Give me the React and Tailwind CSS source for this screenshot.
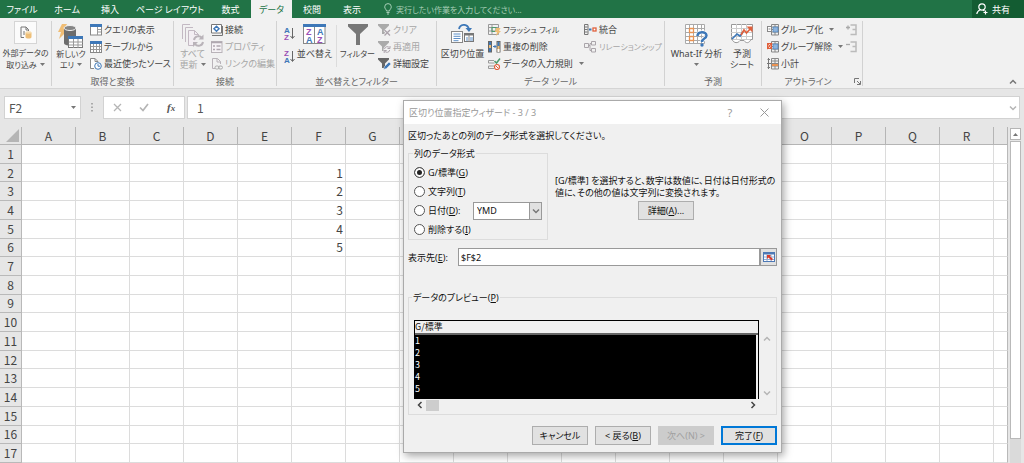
import React, { useState } from 'react';

const columns = 'ABCDEFGHIJKLMNOPQR'.split('');
const rows = Array.from({ length: 17 }, (_, i) => i + 1);
const cells = { F2: 1, F3: 2, F4: 3, F5: 4, F6: 5 };

const tabs = [
  { name: 'ファイル', width: 'w-[44px]' },
  { name: 'ホーム', width: 'w-[46px]' },
  { name: '挿入', width: 'w-[40px]' },
  { name: 'ページ レイアウト', width: 'w-[80px]' },
  { name: '数式', width: 'w-[41px]' },
  { name: 'データ', width: 'w-[41px]' },
  { name: '校閲', width: 'w-[40px]' },
  { name: '表示', width: 'w-[40px]' },
];

/* ---------- icons ---------- */

const Svg = ({ w = 12, h = 12, children }) => (
  <svg width={w} height={h} viewBox={`0 0 ${w} ${h}`} fill="none" className="shrink-0" aria-hidden="true">
    {children}
  </svg>
);

const Caret = () => (
  <svg width="5" height="3" viewBox="0 0 5 3" className="inline-block shrink-0 align-middle" aria-hidden="true">
    <path d="M0 0h5L2.5 3z" fill="#777" />
  </svg>
);

const Chevron = ({ dir, color = '#b5b5b5' }) => {
  const d = {
    up: 'M1 5.5 4 2.5 7 5.5',
    down: 'M1 2.5 4 5.5 7 2.5',
    left: 'M5.5 1 2.5 4 5.5 7',
    right: 'M2.5 1 5.5 4 2.5 7',
  };
  return (
    <Svg w={8} h={8}>
      <path d={d[dir]} stroke={color} strokeWidth="1.5" />
    </Svg>
  );
};

const ExternalDataIcon = () => (
  <Svg w={12} h={13}>
    <path d="M4 11.5H1V1h5l2.500 2.500V5" stroke="#777" />
    <path d="M6 1v3h2.500M3 6h2M3 8h2" stroke="#777" />
    <path d="M5.500 6.500v4.500c0 2 6 2 6 0V6.500z" fill="#eebf78" />
    <ellipse cx="8.500" cy="6.500" rx="3" ry="1.300" fill="#f7dcae" />
  </Svg>
);

const NewQueryIcon = () => (
  <Svg w={26} h={25}>
    <path d="M4 0h5L6 6h4L1 15l2-7H0z" fill="#f0bd74" />
    <path d="M6 4v15c0 3.500 12 3.500 12 0V4z" fill="#6d6d6d" />
    <ellipse cx="12" cy="4" rx="6" ry="2.500" fill="#858585" stroke="#f1f1f1" />
    <rect x="10.500" y="12.500" width="14" height="11" fill="#fff" stroke="#777" />
    <path d="M10 12h15v3H10z" fill="#3e78b8" />
    <path d="M15.500 15v9M20 15v9M11 18h14M11 21h14" stroke="#999" />
  </Svg>
);

const QueryViewIcon = () => (
  <Svg>
    <rect x="0.500" y="0.500" width="11" height="10.500" fill="#fff" stroke="#888" />
    <path d="M0 0h12v3H0z" fill="#3e78b8" />
    <path d="M7.500 3v8M8 5.500h3M8 8h3" stroke="#999" />
  </Svg>
);

const TableIcon = () => (
  <Svg>
    <rect x="0.500" y="0.500" width="11" height="11" fill="#fff" stroke="#888" />
    <path d="M0 0h12v3H0z" fill="#3e78b8" />
    <path d="M3.500 3v8M6.500 3v8M9.500 3v8M1 5.500h10M1 8.500h10" stroke="#999" />
  </Svg>
);

const RecentIcon = () => (
  <Svg>
    <path d="M4 10.500H0.500v-10h4.500l3 3" fill="#fff" stroke="#888" />
    <path d="M5 0.500v3h3" stroke="#888" />
    <circle cx="8" cy="8" r="3.300" fill="#fff" stroke="#3e78b8" />
    <path d="M8 6v2.200h2" stroke="#3e78b8" />
  </Svg>
);

const RefreshAllIcon = () => (
  <Svg w={24} h={23}>
    <path d="M1.500 15V0.500H9M4.500 18V3.500H12" stroke="#c3b9c3" />
    <path d="M12 21.500H7.500v-15h6l4 4V13" fill="#f3eef3" stroke="#c3b9c3" />
    <path d="M13.500 6.500v4h4" stroke="#c3b9c3" />
    <path d="M13 16a4.500 4.500 0 0 1 8-2M22 18a4.500 4.500 0 0 1-8 2" stroke="#b9b3b9" strokeWidth="2" />
    <path d="M22.500 10.500v5h-5zM12 23v-5h5z" fill="#b9b3b9" />
  </Svg>
);

const ConnectionIcon = () => (
  <Svg>
    <path d="M0.500 0.500h10v8.500h-10z" fill="#fff" stroke="#777" />
    <path d="M1 11.500h10.500V2" stroke="#777" />
    <path d="M5.500 2.200 8 4.700 5.500 7.200 3 4.700z" stroke="#3e78b8" strokeWidth="1.500" />
  </Svg>
);

const PropertyIcon = () => (
  <Svg>
    <rect x="0.500" y="0.500" width="10.500" height="11" fill="#f6f3f6" stroke="#b9b3b9" />
    <path d="M0 1.500h11M2 5h2M2 8.500h2M5.500 5h4M5.500 8.500h4" stroke="#b0a8b0" strokeWidth="1.500" />
  </Svg>
);

const LinkEditIcon = () => (
  <Svg>
    <path d="M4 10.500H1.500v-10h5l3 3V6M6 0.500v3.500h3.500" stroke="#b9b3b9" />
    <rect x="4" y="8" width="4" height="3" rx="1.500" stroke="#aaa" />
    <rect x="7.500" y="8" width="4" height="3" rx="1.500" stroke="#aaa" />
  </Svg>
);

const SortIcon = ({ reverse }) => (
  <Svg w={11} h={14}>
    <g fontFamily="Liberation Sans, sans-serif" fontSize="8" fontWeight="bold">
      <text x="0" y="6" fill={reverse ? '#9a4fb5' : '#3e78b8'}>{reverse ? 'Z' : 'A'}</text>
      <text x="0" y="13" fill={reverse ? '#3e78b8' : '#9a4fb5'}>{reverse ? 'A' : 'Z'}</text>
    </g>
    <path d="M8.500 1v10M6.500 9l2 2.500 2-2.500" stroke="#666" />
  </Svg>
);

const SortDialogIcon = () => (
  <Svg w={23} h={20}>
    <rect x="0.500" y="0.500" width="21.500" height="19" fill="#fff" stroke="#888" />
    <path d="M0 0h23v3H0z" fill="#3e78b8" />
    <path d="M11.500 3v17" stroke="#888" />
    <g fontFamily="Liberation Sans, sans-serif" fontSize="9" fontWeight="bold">
      <text x="3" y="11" fill="#9a4fb5">Z</text>
      <text x="3" y="19" fill="#3e78b8">A</text>
      <text x="14" y="11" fill="#3e78b8">A</text>
      <text x="14" y="19" fill="#9a4fb5">Z</text>
    </g>
  </Svg>
);

const FilterIcon = () => (
  <Svg w={22} h={21}>
    <path d="M1 0h20v2.500l-8 7.500v11H9V10L1 2.500z" fill="#777" />
  </Svg>
);

const ClearIcon = () => (
  <Svg w={13}>
    <path d="M0 0h11v1.500L7 5.500V10H4V5.500L0 1.500z" fill="#aaa" />
    <path d="M6.500 6 12 11.500M12 6 6.500 11.500" stroke="#f1f1f1" strokeWidth="3" />
    <path d="M6.500 6 12 11.500M12 6 6.500 11.500" stroke="#aba3ab" strokeWidth="1.300" />
  </Svg>
);

const ReapplyIcon = () => (
  <Svg w={13}>
    <path d="M0 0h11v1.500L7 5.500V10H4V5.500L0 1.500z" fill="#aaa" />
    <circle cx="9" cy="8.500" r="3.500" fill="#f1f1f1" />
    <path d="M6.500 8a2.700 2.700 0 0 1 5-1M11.700 9a2.700 2.700 0 0 1-5 1M12 5v2.500H9.500M6.200 12V9.500h2.500" stroke="#aba3ab" />
  </Svg>
);

const AdvancedIcon = () => (
  <Svg w={13}>
    <path d="M0 0h11v1.500L7 5.500V10H4V5.500L0 1.500z" fill="#666" />
    <path d="m5.500 11.500 1-3L11 4l2 2-4.500 4.500z" fill="#3e78b8" stroke="#f1f1f1" strokeWidth="0.500" />
  </Svg>
);

const TextToColumnsIcon = () => (
  <Svg w={24} h={20}>
    <path d="M8 5c1-5 8-6 10 0" stroke="#3e78b8" strokeWidth="1.800" />
    <path d="M14.500 4H21l-3 4z" fill="#3e78b8" />
    <rect x="0.500" y="7.500" width="11" height="11" fill="#fff" stroke="#888" />
    <path d="M2.500 10h7M2.500 12.300h7M2.500 14.500h7M2.500 16.700h5" stroke="#5d8fc7" />
    <rect x="13.500" y="9.500" width="9" height="8" fill="#fff" stroke="#777" />
    <path d="M13 9h10v2.500H13z" fill="#777" />
    <path d="M18 11v7" stroke="#888" />
    <path d="M15 14h2M19 14h3M15 16h2M19 16h3" stroke="#5d8fc7" />
  </Svg>
);

const FlashFillIcon = () => (
  <Svg w={13}>
    <path d="M0.500 0.500h10v10h-10zM0 3.500h10M0 7h10M4 0v10" stroke="#999" />
    <rect x="4" y="3.500" width="4" height="4" stroke="#4e9a6d" />
    <path d="M8 4h4.500l-1.500 3h2L8 12l1-4H7z" fill="#f0bd74" />
  </Svg>
);

const DuplicateIcon = () => (
  <Svg w={13}>
    <rect x="0.500" y="0.500" width="3" height="10.500" fill="#3e78b8" stroke="#666" />
    <path d="M1 4h2v3H1z" fill="#f0bd74" />
    <path d="M5 5.500h3M6.500 4 8 5.500 6.500 7" stroke="#3e78b8" />
    <rect x="9" y="0.500" width="3" height="10.500" fill="#f0bd74" stroke="#666" />
    <path d="M9.500 1h2v4h-2z" fill="#3e78b8" />
    <path d="M9.500 8h2v3h-2z" fill="#fff" />
  </Svg>
);

const ValidationIcon = () => (
  <Svg w={13}>
    <path d="M6 2.500H0.500V5h6M6 8H0.500v2.500H6" stroke="#999" />
    <path d="m6.500 3 2 2L12 0.500" stroke="#4e9a6d" strokeWidth="1.500" />
    <circle cx="9" cy="9" r="2.500" fill="#fff" stroke="#e0603c" strokeWidth="1.200" />
    <path d="m7.500 7.500 3 3" stroke="#e0603c" />
  </Svg>
);

const ConsolidateIcon = () => (
  <Svg w={13}>
    <path d="M0.500 0.500h3.500v10H0.500zM0.500 3h3M0.500 5.500h3M0.500 8h3" stroke="#777" />
    <path d="M5 5.500h2.500" stroke="#3e78b8" strokeWidth="2" />
    <rect x="9" y="4" width="3" height="3" fill="#fff" stroke="#e0603c" strokeWidth="1.300" />
  </Svg>
);

const RelationIcon = () => (
  <Svg w={13}>
    <path d="M0.500 2.500h4v4h-4zM7.500 0.500h4v3.500h-4zM7.500 7.500h4V11h-4zM4.500 4.500H6v-2h1.500M6 4.500v5h1.500" stroke="#aaa5aa" />
  </Svg>
);

const WhatIfIcon = () => (
  <Svg w={23} h={23}>
    <rect x="0.500" y="0.500" width="19" height="19" fill="#fff" />
    <path d="M0.500 0.500h19v19h-19zM0 4.500h19M0 8.500h19M0 12.500h19M0 16.500h19M4.500 0v19M8.500 0v19M12.500 0v19M16.500 0v19" stroke="#aaa" />
    <path d="M4.500 4.500h4v4h-4zM4.500 12.500h4v4h-4z" fill="#fff" stroke="#eb9352" strokeWidth="1.300" />
    <path d="M12.500 12c0-5 9-5 9-.5 0 3.500-4.500 2.500-4.500 6.500" stroke="#fff" strokeWidth="4" />
    <path d="M12.500 12c0-5 9-5 9-.5 0 3.500-4.500 2.500-4.500 6.500" stroke="#3e78b8" strokeWidth="2.500" />
    <circle cx="17" cy="21" r="1.700" fill="#3e78b8" />
  </Svg>
);

const ForecastIcon = () => (
  <Svg w={23} h={20}>
    <path d="M0.500 0.500h21v15h-21z" fill="#fff" stroke="#999" />
    <path d="M0 4.500h21M0 8.500h21M0 12.500h21M5.500 0v15M10.500 0v15M15.500 0v15" stroke="#ccc" />
    <path d="M1 15.500c2 4 6 4 8 1h4c2 3 5 3 7-1" fill="#fff" stroke="#999" />
    <path d="m1 15 5-5 3 2 3-4" stroke="#3e78b8" strokeWidth="1.700" />
    <path d="m10 11 3-5 2.500 3L20 4" stroke="#e0603c" strokeWidth="1.700" />
    <path d="M15.500 2.500H21.500V8.500z" fill="#e0603c" />
  </Svg>
);

const GroupIcon = ({ kind }) => (
  <Svg>
    <path d="M4.500 0.500h7v10.500h-7zM4.500 3h7M4.500 5.500h7M4.500 8h7M8 0v11" stroke="#888" />
    {kind === 'subtotal' ? (
      <>
        <path d="M0.500 1.500H3M0.500 9.500H3M1.500 0v11M0 5.500h4" stroke="#777" />
        <path d="M5 6h6v2H5z" fill="#eb9352" />
      </>
    ) : (
      <>
        <path d="M6 3h5v5H6z" fill="#8fb4dc" stroke="#3e78b8" strokeWidth="0.600" />
        <rect x="0.500" y="2.500" width="4" height="5" fill="#fff" stroke={kind === 'ungroup' ? '#e0603c' : '#888'} />
        {kind === 'ungroup' ? (
          <path d="m0 8 5-6M1 3l3 4" stroke="#e0603c" strokeWidth="1.200" />
        ) : (
          <path d="M1.500 5h2" stroke="#888" />
        )}
      </>
    )}
  </Svg>
);

const DetailIcon = ({ plus }) => (
  <Svg w={11}>
    <path d={plus ? 'M0 3.500h4M2 1.500v4' : 'M0 3.500h4'} stroke="#a9a9a9" strokeWidth="1.300" />
    <path d="M4.500 1H10v9.500H4.500M6.500 5.500h3.500" stroke="#bbb" strokeWidth="1.500" />
  </Svg>
);

const BulbIcon = () => (
  <Svg w={8} h={12}>
    <path d="M2.500 8C2.500 6.500 0.700 5.800 0.700 3.900a3.300 3.300 0 0 1 6.600 0C7.300 5.800 5.500 6.500 5.500 8zM2.500 9.500h3M3 11h2" stroke="#a5cdb5" />
  </Svg>
);

const ShareIcon = () => (
  <Svg>
    <circle cx="6" cy="4" r="3.200" stroke="#fff" strokeWidth="1.200" />
    <path d="M4.500 6.500C2.500 7.500 1 9 0.800 11M7 7l1.500 1M9.500 7.500v4M7.500 9.500h4" stroke="#fff" strokeWidth="1.200" />
  </Svg>
);

const RefEditIcon = () => (
  <Svg w={12} h={10}>
    <rect x="0.500" y="0.500" width="11" height="9" fill="#fff" stroke="#4d79b5" />
    <path d="M0 0h12v2.500H0z" fill="#4d79b5" />
    <path d="M1 5h10M1 7.500h10M4 2v7M8 2v7" stroke="#8fabd3" />
    <path d="M4 3h4L7 4.200 10 7 8.500 8.500 5.500 5.500 4 7z" fill="#d93a2b" />
  </Svg>
);

/* ---------- ribbon ---------- */

const Group = ({ label, width, children, launcher }) => (
  <div className={`${width} flex shrink-0 flex-col border-r border-[#d2d2d2]`}>
    <div className="flex h-[51px]">{children}</div>
    <div className="flex h-[14px] items-center justify-center text-[#666]">
      <span className="flex-1 pt-1 text-center">{label}</span>
      {launcher && (
        <button aria-label="アウトラインの設定" className="mr-px pt-1">
          <Svg w={7} h={7}>
            <path d="M0.500 5V0.500H5M3 3l3 3M6.500 3v3.500H3" stroke="#777" />
          </Svg>
        </button>
      )}
    </div>
  </div>
);

const BigButton = ({ icon, lines, caret, width, disabled, size = 'text-[9px]' }) => (
  <button
    disabled={disabled}
    className={`${width} ${size} flex shrink-0 flex-col items-center whitespace-nowrap pt-[3px] leading-[11px] disabled:text-[#a6a6a6]`}
  >
    <span className="flex h-[24px] shrink-0 items-start">{icon}</span>
    {lines.map((line, i) => (
      <span key={line} className="flex h-[11px] items-center gap-[3px]">
        {line}
        {caret && i === lines.length - 1 && <Caret />}
      </span>
    ))}
  </button>
);

const SmallButton = ({ icon, label, caret, disabled, size = 'text-[9px]' }) => (
  <button
    disabled={disabled}
    className={`${size} flex h-[17px] items-center gap-[2px] leading-[11px] whitespace-nowrap disabled:text-[#a6a6a6]`}
  >
    {icon}
    <span>{label}</span>
    {caret && <span className="ml-1 flex"><Caret /></span>}
  </button>
);

const Ribbon = () => (
  <div className="flex shrink-0 overflow-hidden border-b border-[#d5d5d5] bg-[#f1f1f1] pt-[3px] pb-[2px] text-[#444]">
    <div className="flex w-[52px] shrink-0 flex-col border-r border-[#d2d2d2]">
      <button className="flex flex-col items-center text-[8px] leading-[11px] whitespace-nowrap">
        <span className="mb-[3px] flex h-[23px] w-[23px] items-center justify-center border border-[#d5d5d5] bg-[#fbfbfb]">
          <ExternalDataIcon />
        </span>
        <span className="h-[12px]">外部データの</span>
        <span className="flex h-[11px] items-center gap-[3px]">取り込み <Caret /></span>
      </button>
    </div>

    <Group label="取得と変換" width="w-[122px]">
      <BigButton icon={<NewQueryIcon />} lines={['新しいク', 'エリ']} caret width="w-[38px]" size="text-[8px]" />
      <div className="flex flex-col">
        <SmallButton icon={<QueryViewIcon />} label="クエリの表示" />
        <SmallButton icon={<TableIcon />} label="テーブルから" />
        <SmallButton icon={<RecentIcon />} label="最近使ったソース" />
      </div>
    </Group>

    <Group label="接続" width="w-[103px]">
      <BigButton icon={<RefreshAllIcon />} lines={['すべて', '更新']} caret disabled width="w-[37px]" />
      <div className="flex flex-col">
        <SmallButton icon={<ConnectionIcon />} label="接続" />
        <SmallButton icon={<PropertyIcon />} label="プロパティ" disabled />
        <SmallButton icon={<LinkEditIcon />} label="リンクの編集" disabled />
      </div>
    </Group>

    <Group label="並べ替えとフィルター" width="w-[160px]">
      <div className="flex w-[18px] shrink-0 flex-col items-end gap-[9px] pt-[6px]">
        <button aria-label="昇順"><SortIcon /></button>
        <button aria-label="降順"><SortIcon reverse /></button>
      </div>
      <BigButton icon={<SortDialogIcon />} lines={['並べ替え']} width="w-[39px]" />
      <div className="ml-[2px] mt-1 h-[42px] w-px bg-[#dcdcdc]" />
      <BigButton icon={<FilterIcon />} lines={['フィルター']} width="w-[41px]" size="text-[8px]" />
      <div className="flex flex-col">
        <SmallButton icon={<ClearIcon />} label="クリア" disabled />
        <SmallButton icon={<ReapplyIcon />} label="再適用" disabled />
        <SmallButton icon={<AdvancedIcon />} label="詳細設定" />
      </div>
    </Group>

    <Group label="データ ツール" width="w-[228px]">
      <BigButton icon={<TextToColumnsIcon />} lines={['区切り位置']} width="w-[51px]" />
      <div className="flex w-[96px] shrink-0 flex-col">
        <SmallButton icon={<FlashFillIcon />} label="フラッシュ フィル" size="text-[8px]" />
        <SmallButton icon={<DuplicateIcon />} label="重複の削除" />
        <SmallButton icon={<ValidationIcon />} label="データの入力規則" caret />
      </div>
      <div className="flex flex-col">
        <SmallButton icon={<ConsolidateIcon />} label="統合" />
        <SmallButton icon={<RelationIcon />} label="リレーションシップ" disabled size="text-[8px]" />
      </div>
    </Group>

    <Group label="予測" width="w-[97px]">
      <BigButton icon={<WhatIfIcon />} lines={['What-If 分析', '']} caret width="w-[63px]" />
      <BigButton icon={<ForecastIcon />} lines={['予測', 'シート']} width="w-[28px]" />
    </Group>

    <Group label="アウトライン" width="w-[101px]" launcher>
      <div className="flex flex-1 flex-col pl-[5px]">
        <SmallButton icon={<GroupIcon kind="group" />} label="グループ化" caret />
        <SmallButton icon={<GroupIcon kind="ungroup" />} label="グループ解除" caret />
        <SmallButton icon={<GroupIcon kind="subtotal" />} label="小計" />
      </div>
      <div className="mr-[5px] flex flex-col">
        <button aria-label="詳細データの表示" className="flex h-[17px] items-center"><DetailIcon plus /></button>
        <button aria-label="詳細を表示しない" className="flex h-[17px] items-center"><DetailIcon /></button>
      </div>
    </Group>

    <button aria-label="リボンを折りたたむ" className="mr-[7px] ml-auto self-end">
      <Chevron dir="up" color="#777" />
    </button>
  </div>
);

const TabBar = ({ active, setActive }) => (
  <div className="flex h-[18px] shrink-0 items-stretch bg-[#217346] text-white">
    {tabs.map(tab => (
      <button
        key={tab.name}
        onClick={() => setActive(tab.name)}
        className={`${tab.width} shrink-0 whitespace-nowrap ${active === tab.name ? 'bg-[#f1f1f1] text-[#217346]' : ''}`}
      >
        {tab.name}
      </button>
    ))}
    <button className="ml-3 flex items-center gap-1 text-[8px] whitespace-nowrap text-[#a5cdb5]">
      <BulbIcon />
      実行したい作業を入力してください...
    </button>
    <button className="ml-auto flex w-[52px] items-center gap-1 bg-[#135c32] pl-1">
      <ShareIcon />
      共有
    </button>
  </div>
);

/* ---------- formula bar and sheet ---------- */

const FormulaBar = () => (
  <div className="flex h-[38px] shrink-0 items-start bg-[#e6e6e6] pt-[7px] pr-1 pl-1 font-['Noto_Sans_CJK_JP',sans-serif] text-xs text-[#555]">
    <div className="flex h-[23px] w-[77px] items-center border border-[#d2d2d2] bg-white pr-1">
      <input aria-label="名前ボックス" defaultValue="F2" className="w-full min-w-0 flex-1 pl-1 outline-none" />
      <Caret />
    </div>
    <div className="flex h-[23px] w-[22px] items-center justify-center">
      <Svg w={2} h={9}>
        <path d="M0 0h2v1.500H0zM0 3.500h2V5H0zM0 7h2v1.500H0z" fill="#aaa" />
      </Svg>
    </div>
    <div className="flex h-[23px] w-[82px] items-center justify-around border border-[#d2d2d2] bg-white">
      <button aria-label="キャンセル">
        <Svg w={9} h={9}><path d="m1 1 7 7M8 1 1 8" stroke="#b5b5b5" strokeWidth="1.300" /></Svg>
      </button>
      <button aria-label="入力">
        <Svg w={10} h={9}><path d="m1 4.500 3 3L9 1" stroke="#b5b5b5" strokeWidth="1.700" /></Svg>
      </button>
      <button aria-label="関数の挿入" className="font-['Liberation_Serif',serif] text-[11px] font-bold italic">
        f<span className="text-[9px]">x</span>
      </button>
    </div>
    <div className="ml-[2px] flex h-[23px] flex-1 items-center border border-[#d2d2d2] bg-white pr-[2px]">
      <input aria-label="数式バー" defaultValue="1" className="min-w-0 flex-1 pl-[9px] outline-none" />
      <Chevron dir="down" />
    </div>
  </div>
);

const Sheet = () => (
  <div className="flex min-h-0 flex-1 bg-[#e6e6e6]">
    <div className="min-w-0 flex-1">
      <table className="h-full w-full table-fixed border-separate border-spacing-0 font-['Noto_Sans_CJK_JP',sans-serif] text-xs leading-[14px] text-[#444]">
        <colgroup>
          <col className="w-[22px]" />
          {columns.map(c => <col key={c} />)}
          <col className="w-[14px]" />
        </colgroup>
        <thead>
          <tr className="h-[18px]">
            <th aria-label="すべて選択" className="border-r border-b border-[#b5b5b5] p-0">
              <div className="ml-[6px] flex">
                <Svg w={13} h={13}><path d="M13 0v13H0z" fill="#b5b5b5" /></Svg>
              </div>
            </th>
            {columns.map(c => (
              <th key={c} scope="col" className="border-r border-b border-[#b5b5b5] p-0 font-normal">{c}</th>
            ))}
            <th className="border-r border-b border-[#b5b5b5] p-0" />
          </tr>
        </thead>
        <tbody>
          {rows.map(r => (
            <tr key={r}>
              <th scope="row" className="border-r border-b border-[#b9b9b9] p-0 font-normal">{r}</th>
              {columns.map(c => (
                <td key={c} className="border-r border-b border-[#dcdcdc] bg-white p-0 pr-[2px] text-right">
                  {cells[c + r]}
                </td>
              ))}
              <td className="border-r border-b border-r-[#b9b9b9] border-b-[#dcdcdc] bg-white p-0" />
            </tr>
          ))}
        </tbody>
      </table>
    </div>
    <div className="flex w-[16px] shrink-0 flex-col pt-[1px] pr-[3px] pl-[2px]">
      <button aria-label="上へスクロール" className="flex h-[12px] shrink-0 items-center justify-center border border-[#b5b5b5] bg-white">
        <svg width="5" height="3" viewBox="0 0 5 3"><path d="M0 3h5L2.500 0z" fill="#777" /></svg>
      </button>
      <div className="mt-px flex-1 border border-[#b9b9b9] bg-white" />
      <div className="h-6 shrink-0 bg-[#dadada]" />
    </div>
  </div>
);

/* ---------- wizard ---------- */

const formats = [
  { id: 'general', label: 'G/標準', accel: 'G' },
  { id: 'text', label: '文字列', accel: 'T' },
  { id: 'date', label: '日付', accel: 'D' },
  { id: 'skip', label: '削除する', accel: 'I' },
];

const Accel = ({ k }) => <>(<u>{k}</u>)</>;

const dialogButton = 'h-[19px] w-[56px] border border-[#adadad] bg-[#e1e1e1] leading-[15px]';

const Wizard = () => {
  const [format, setFormat] = useState('general');

  return (
    <div
      role="dialog"
      aria-label="区切り位置指定ウィザード"
      className="absolute top-[100px] left-[403px] w-[379px] border border-[#aaa] bg-[#f0f0f0] text-[#111] shadow-[2px_3px_8px_rgba(0,0,0,0.35)]"
    >
      <div className="flex h-[23px] items-center bg-white pl-[5px] text-[#999]">
        <span className="flex-1">区切り位置指定ウィザード - 3 / 3</span>
        <button aria-label="ヘルプ" className="w-[34px] text-[11px]">?</button>
        <button aria-label="閉じる" className="flex w-[34px] justify-center">
          <Svg w={9} h={9}><path d="m0.500 0.500 8 8M8.500 0.500l-8 8" stroke="#999" /></Svg>
        </button>
      </div>

      <div className="px-1 pb-[7px]">
        <p className="pt-[5px] leading-[14px]">区切ったあとの列のデータ形式を選択してください。</p>

        <div className="mt-1 flex">
          <fieldset className="h-[93px] w-[140px] shrink-0 border border-[#dcdcdc] px-[5px]">
            <legend className="-ml-px px-px leading-[13px]">列のデータ形式</legend>
            <div className="flex flex-col pt-[3px]">
              {formats.map(f => (
                <div key={f.id} className="flex h-[19px] items-center">
                  <label className="flex flex-1 items-center gap-[3px]">
                    <input
                      type="radio"
                      name="format"
                      checked={format === f.id}
                      onChange={() => setFormat(f.id)}
                      className="h-[11px] w-[11px] appearance-none rounded-full border border-[#555] bg-white checked:bg-[#222] checked:shadow-[inset_0_0_0_2px_white]"
                    />
                    <span>{f.label}<Accel k={f.accel} />{f.id === 'date' && ':'}</span>
                  </label>
                  {f.id === 'date' && (
                    <div className="flex h-[18px] w-[69px] border border-[#999] bg-white">
                      <select aria-label="日付の形式" className="min-w-0 flex-1 appearance-none pl-[3px] outline-none">
                        <option>YMD</option>
                        <option>MDY</option>
                        <option>DMY</option>
                      </select>
                      <span className="pointer-events-none flex w-[12px] items-center justify-center border-l border-[#999] bg-[#e1e1e1]">
                        <Chevron dir="down" color="#777" />
                      </span>
                    </div>
                  )}
                </div>
              ))}
            </div>
          </fieldset>

          <div className="flex flex-1 flex-col items-start pt-[28px] pl-[7px]">
            <p className="leading-[12px] whitespace-nowrap">
              [G/標準] を選択すると、数字は数値に、日付は日付形式の<br />
              値に、その他の値は文字列に変換されます。
            </p>
            <button className={`${dialogButton} mt-[2px] ml-[83px]`}>詳細<Accel k="A" />...</button>
          </div>
        </div>

        <div className="mt-[8px] flex h-[18px] items-center">
          <label htmlFor="dest" className="w-[50px] shrink-0 whitespace-nowrap">表示先<Accel k="E" />:</label>
          <input id="dest" defaultValue="$F$2" className="h-[18px] min-w-0 flex-1 border border-[#999] bg-white pl-[2px] outline-none" />
          <button aria-label="セル範囲の選択" className="flex h-[18px] w-[17px] items-center justify-center border border-[#999] bg-[#e1e1e1]">
            <RefEditIcon />
          </button>
        </div>

        <fieldset className="mt-[25px] h-[124px] border border-[#dcdcdc] pr-[2px] pl-[5px]">
          <legend className="-ml-[2px] px-px leading-[13px]">データのプレビュー<Accel k="P" /></legend>
          <div className="flex pt-[16px]">
            <div className="flex-1 border border-b-0 border-black font-['Noto_Sans_CJK_JP',sans-serif]">
              <div className="h-[14px] border-b-2 border-[#666] leading-[12px]">G/標準</div>
              <ul className="mr-[2px] h-[64px] bg-black text-white">
                {Object.values(cells).map(v => (
                  <li key={v} className="h-[12px] leading-[11px]">{v}</li>
                ))}
              </ul>
            </div>
            <div className="flex w-[15px] flex-col items-center justify-between pt-[15px] pb-[2px]">
              <Chevron dir="up" />
              <Chevron dir="down" />
            </div>
          </div>
          <div className="mr-[17px] flex h-[12px] items-center pl-[2px]">
            <Chevron dir="left" color="#444" />
            <div className="ml-[2px] h-[11px] w-[13px] bg-[#cdcdcd]" />
            <div className="flex-1" />
            <Chevron dir="right" color="#444" />
          </div>
        </fieldset>

        <div className="mt-[11px] flex justify-end gap-[7px]">
          <button className={dialogButton}>キャンセル</button>
          <button className={dialogButton}>&lt; 戻る<Accel k="B" /></button>
          <button disabled className="h-[19px] w-[56px] bg-[#cccccc] leading-[15px] text-[#a0a0a0]">次へ(N) &gt;</button>
          <button className="h-[19px] w-[56px] border-2 border-[#0078d7] bg-[#e1e1e1] leading-[14px]">完了<Accel k="F" /></button>
        </div>
      </div>
    </div>
  );
};

const App = () => {
  const [active, setActive] = useState('データ');

  return (
    <div
      lang="ja"
      className="relative flex h-screen flex-col overflow-hidden font-['Noto_Sans','Noto_Sans_CJK_JP',sans-serif] text-[9px] leading-[11px] [font-feature-settings:'palt']"
    >
      <TabBar active={active} setActive={setActive} />
      <Ribbon />
      <FormulaBar />
      <Sheet />
      <Wizard />
    </div>
  );
};

export default App;
